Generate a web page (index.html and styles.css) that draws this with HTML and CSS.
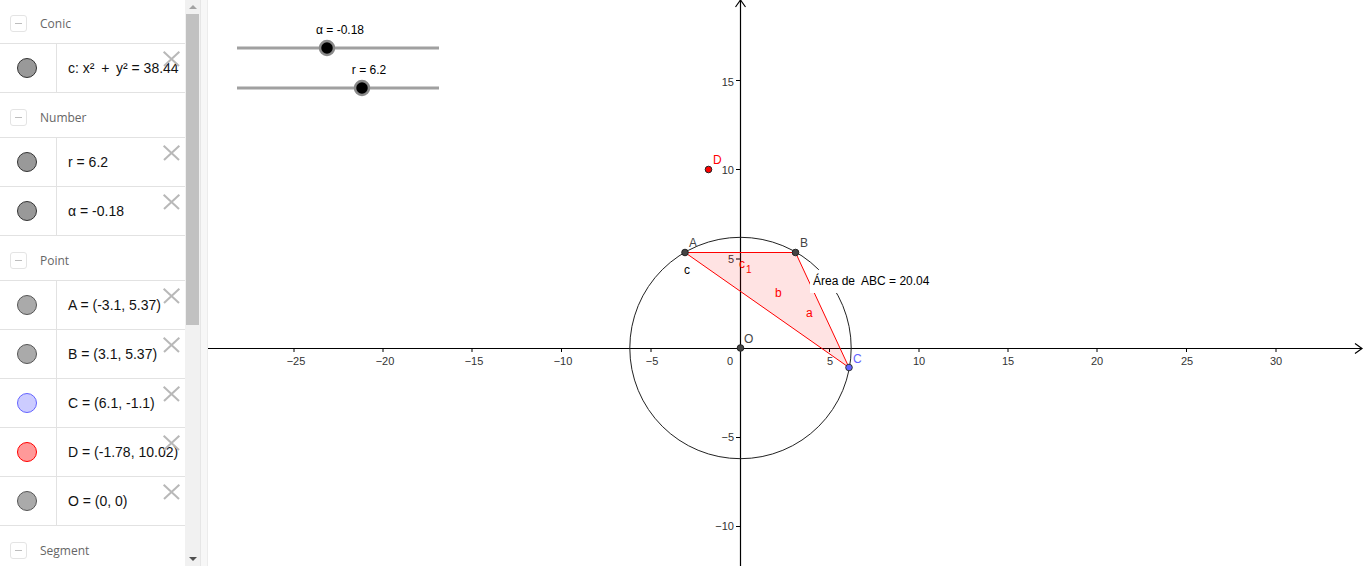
FILE: index.html
```html
<!DOCTYPE html>
<html>
<head>
<meta charset="utf-8">
<link rel="stylesheet" href="styles.css">
</head>
<body>
<div class="app">
  <aside class="algebra">
    <div class="list">
      <div class="group first"><span class="minus"></span><span class="gname">Conic</span></div>
      <div class="row"><div class="marble-cell"><span class="marble m-dark"></span></div><div class="val">c: x²&thinsp; + &thinsp;y² = 38.44</div><span class="del"></span></div>
      <div class="group"><span class="minus"></span><span class="gname">Number</span></div>
      <div class="row"><div class="marble-cell"><span class="marble m-dark"></span></div><div class="val">r = 6.2</div><span class="del"></span></div>
      <div class="row"><div class="marble-cell"><span class="marble m-dark"></span></div><div class="val">α = -0.18</div><span class="del"></span></div>
      <div class="group"><span class="minus"></span><span class="gname">Point</span></div>
      <div class="row"><div class="marble-cell"><span class="marble m-gray"></span></div><div class="val">A = (-3.1, 5.37)</div><span class="del"></span></div>
      <div class="row"><div class="marble-cell"><span class="marble m-gray"></span></div><div class="val">B = (3.1, 5.37)</div><span class="del"></span></div>
      <div class="row"><div class="marble-cell"><span class="marble m-blue"></span></div><div class="val">C = (6.1, -1.1)</div><span class="del"></span></div>
      <div class="row"><div class="marble-cell"><span class="marble m-red"></span></div><div class="val">D = (-1.78, 10.02)</div><span class="del"></span></div>
      <div class="row"><div class="marble-cell"><span class="marble m-gray"></span></div><div class="val">O = (0, 0)</div><span class="del"></span></div>
      <div class="group"><span class="minus"></span><span class="gname">Segment</span></div>
    </div>
    <div class="scrollbar">
      <span class="arrow up"></span>
      <div class="track"><div class="thumb"></div></div>
      <span class="arrow down"></span>
    </div>
  </aside>
  <div class="divider"></div>
  <main class="graphics">
    <svg class="canvas" viewBox="208 0 1158 566" width="1158" height="566" xmlns="http://www.w3.org/2000/svg">
      <g class="slider">
        <line x1="237" y1="48" x2="439" y2="48" class="slide-line"/>
        <circle cx="327" cy="48" r="7" class="slide-thumb"/>
        <text x="340" y="34" text-anchor="middle" class="lbl">α = -0.18</text>
        <line x1="237" y1="88" x2="439" y2="88" class="slide-line"/>
        <circle cx="362" cy="88" r="7" class="slide-thumb"/>
        <text x="369" y="74" text-anchor="middle" class="lbl">r = 6.2</text>
      </g>
      <line x1="208" y1="348.5" x2="1362" y2="348.5" class="axis"/>
      <polyline points="1355,343.5 1362,348.5 1355,353.5" class="axis-arrow"/>
      <line x1="740.5" y1="0" x2="740.5" y2="566" class="axis"/>
      <polyline points="735.5,7 740.5,0 745.5,7" class="axis-arrow"/>
      <g class="ticks">
        <line x1="294" y1="348" x2="294" y2="352"/>
        <line x1="383" y1="348" x2="383" y2="352"/>
        <line x1="472" y1="348" x2="472" y2="352"/>
        <line x1="561.5" y1="348" x2="561.5" y2="352"/>
        <line x1="651" y1="348" x2="651" y2="352"/>
        <line x1="829.5" y1="348" x2="829.5" y2="352"/>
        <line x1="919" y1="348" x2="919" y2="352"/>
        <line x1="1008" y1="348" x2="1008" y2="352"/>
        <line x1="1097" y1="348" x2="1097" y2="352"/>
        <line x1="1186.5" y1="348" x2="1186.5" y2="352"/>
        <line x1="1276" y1="348" x2="1276" y2="352"/>
        <line x1="736" y1="80.5" x2="740" y2="80.5"/>
        <line x1="736" y1="169.5" x2="740" y2="169.5"/>
        <line x1="736" y1="259" x2="740" y2="259"/>
        <line x1="736" y1="437.5" x2="740" y2="437.5"/>
        <line x1="736" y1="526.5" x2="740" y2="526.5"/>
      </g>
      <g class="axlbl">
        <text x="296" y="365" text-anchor="middle">−25</text>
        <text x="385" y="365" text-anchor="middle">−20</text>
        <text x="474" y="365" text-anchor="middle">−15</text>
        <text x="563" y="365" text-anchor="middle">−10</text>
        <text x="652" y="365" text-anchor="middle">−5</text>
        <text x="730" y="365" text-anchor="middle">0</text>
        <text x="830" y="365" text-anchor="middle">5</text>
        <text x="919" y="365" text-anchor="middle">10</text>
        <text x="1008" y="365" text-anchor="middle">15</text>
        <text x="1097" y="365" text-anchor="middle">20</text>
        <text x="1187" y="365" text-anchor="middle">25</text>
        <text x="1276" y="365" text-anchor="middle">30</text>
        <text x="734" y="86" text-anchor="end">15</text>
        <text x="734" y="174" text-anchor="end">10</text>
        <text x="734" y="263" text-anchor="end">5</text>
        <text x="734" y="441" text-anchor="end">−5</text>
        <text x="734" y="530" text-anchor="end">−10</text>
      </g>
      <polygon points="685,252.5 795.5,252.5 849,367.5" class="tri"/>
      <circle cx="740.5" cy="348" r="110.7" class="conic"/>
      <rect x="810" y="270" width="127" height="23" class="lblbox"/>
      <text x="813" y="285" class="lbl pre">Área de  ABC = 20.04</text>
      <text x="684" y="274" class="lbl">c</text>
      <text x="739" y="268" class="lbl red">c</text>
      <text x="746" y="273" class="lbl red small">1</text>
      <text x="775" y="297" class="lbl red">b</text>
      <text x="806" y="317" class="lbl red">a</text>
      <circle cx="685" cy="252.5" r="3.3" class="pt"/>
      <circle cx="795.5" cy="252.5" r="3.3" class="pt"/>
      <circle cx="740.5" cy="348" r="3.3" class="pt"/>
      <circle cx="849" cy="367.5" r="3.3" class="pt blue"/>
      <circle cx="708.5" cy="169.5" r="3.3" class="pt red"/>
      <text x="689" y="247" class="plbl">A</text>
      <text x="800" y="247" class="plbl">B</text>
      <text x="744" y="343" class="plbl">O</text>
      <text x="853" y="363" class="plbl blue">C</text>
      <text x="713" y="164" class="plbl red">D</text>
    </svg>
  </main>
</div>
</body>
</html>
```
FILE: styles.css
```css
* { box-sizing: border-box; }
html, body { margin: 0; padding: 0; }
body {
  width: 1366px;
  height: 566px;
  overflow: hidden;
  background: #fff;
  font-family: "Liberation Sans", Arial, sans-serif;
}
.app {
  display: flex;
  height: 566px;
}
.algebra {
  width: 200px;
  display: flex;
  flex: none;
  overflow: hidden;
}
.list {
  width: 185px;
  flex: none;
  overflow: hidden;
}
.group {
  height: 45px;
  border-bottom: 1px solid #e2e2e2;
  display: flex;
  align-items: center;
  padding-left: 10px;
  padding-top: 4px;
}
.group.first { margin-top: -1px; }
.minus {
  width: 17px;
  height: 17px;
  border: 1px solid #e4e4e4;
  border-radius: 3px;
  position: relative;
  margin-right: 13px;
}
.minus::after {
  content: "";
  position: absolute;
  left: 4px;
  right: 4px;
  top: 7px;
  height: 1px;
  background: #bdbdbd;
}
.gname {
  font-family: "Open Sans", "Noto Sans", sans-serif;
  font-size: 12px;
  color: #666;
}
.row {
  height: 49px;
  border-bottom: 1px solid #e2e2e2;
  display: flex;
  align-items: stretch;
  position: relative;
}
.marble-cell {
  width: 57px;
  flex: none;
  border-right: 1px solid #e2e2e2;
  display: flex;
  align-items: center;
  justify-content: center;
}
.marble {
  width: 20px;
  height: 20px;
  border-radius: 50%;
  display: block;
  margin-left: -2px;
}
.m-dark { background: #999; border: 1px solid #333; }
.m-gray { background: #aaa; border: 1px solid #555; }
.m-blue { background: #ccccff; border: 1px solid #6464ff; }
.m-red { background: #ff9999; border: 1px solid #ff0000; }
.val {
  display: flex;
  align-items: center;
  padding-left: 11px;
  font-family: "Liberation Sans", Arial, sans-serif;
  font-size: 14px;
  color: #111;
  white-space: nowrap;
}
.del {
  position: absolute;
  left: 163px;
  top: 7px;
  width: 17px;
  height: 16px;
}
.del::before, .del::after {
  content: "";
  position: absolute;
  left: -2px;
  top: 7px;
  width: 21px;
  height: 1.5px;
  background: #b8b8b8;
}
.del::before { transform: rotate(43deg); }
.del::after { transform: rotate(-43deg); }
.scrollbar {
  width: 15px;
  flex: none;
  background: #f1f1f1;
  display: flex;
  flex-direction: column;
  align-items: center;
}
.arrow {
  width: 0;
  height: 0;
  border-left: 4px solid transparent;
  border-right: 4px solid transparent;
  flex: none;
}
.arrow.up { border-bottom: 4px solid #a3a3a3; margin-top: 5px; }
.arrow.down { border-top: 4px solid #505050; margin-bottom: 5px; }
.track {
  flex: 1;
  width: 100%;
  padding: 5px 1px 0 1px;
}
.thumb {
  height: 311px;
  background: #c1c1c1;
}
.divider {
  width: 8px;
  flex: none;
  background: #f7f7f7;
  border-left: 1px solid #e6e6e6;
  border-right: 1px solid #ececec;
}
.graphics {
  flex: 1;
  overflow: hidden;
}
.canvas { display: block; }
.slide-line { stroke: #a0a0a0; stroke-width: 3; }
.slide-thumb { fill: #000; stroke: #8a8a8a; stroke-width: 2.5; }
.lbl {
  font-family: "Liberation Sans", Arial, sans-serif;
  font-size: 12px;
  fill: #000;
}
.lbl.pre { white-space: pre; }
.lbl.small { font-size: 10px; }
.red { fill: #ff0000; }
.axis { stroke: #000; stroke-width: 1.2; }
.axis-arrow { fill: none; stroke: #000; stroke-width: 1.2; }
.ticks line { stroke: #000; stroke-width: 1; }
.axlbl text {
  font-family: "Liberation Sans", Arial, sans-serif;
  font-size: 11px;
  fill: #333;
}
.tri { fill: rgba(255, 0, 0, 0.11); stroke: #ff0000; stroke-width: 1; }
.conic { fill: none; stroke: #222; stroke-width: 1; }
.lblbox { fill: #fff; }
.pt { fill: #444; stroke: #222; stroke-width: 1; }
.pt.blue { fill: #6464ff; stroke: #333; }
.pt.red { fill: #ff0000; stroke: #222; }
.plbl {
  font-family: "Liberation Sans", Arial, sans-serif;
  font-size: 12px;
  fill: #444;
}
.plbl.blue { fill: #6464ff; }
.plbl.red { fill: #ff0000; }
```
